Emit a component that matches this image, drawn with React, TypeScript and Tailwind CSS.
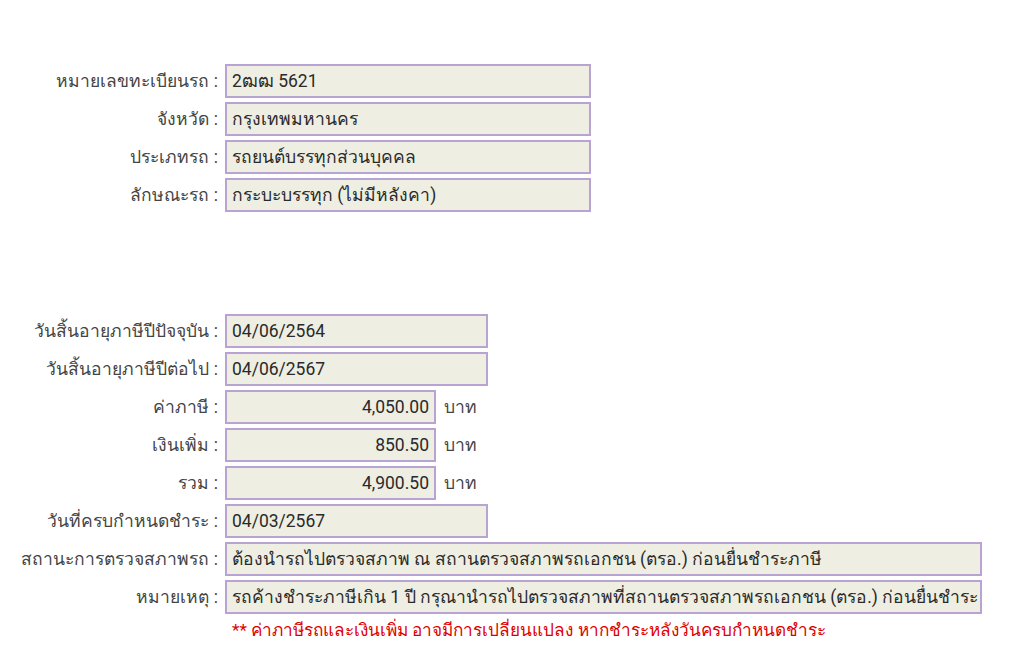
import React from "react";

const font = { fontFamily: "Roboto, 'Noto Sans', sans-serif" };

function Row({
  label,
  value,
  w,
  right,
  unit,
  mt,
}: {
  label: string;
  value: string;
  w: string;
  right?: boolean;
  unit?: string;
  mt?: string;
}) {
  return (
    <div className={`flex items-center h-[34px] ${mt ?? "mt-[4px]"}`}>
      <div className="w-[222px] shrink-0 text-right pr-[4px] text-[17.5px] text-[#444] whitespace-nowrap">
        {label} :
      </div>
      <div
        className={`ml-[3px] h-[34px] ${w} border-2 border-[#b9a3d3] bg-[#eeeee2] flex items-center px-[5px] text-[17.5px] text-[#2a2a2a] whitespace-nowrap overflow-hidden ${
          right ? "justify-end" : ""
        }`}
      >
        {value}
      </div>
      {unit && <div className="ml-[8px] text-[17.5px] text-[#444]">{unit}</div>}
    </div>
  );
}

export default function App() {
  return (
    <div className="w-[1026px] h-[665px] bg-white" style={font}>
      <div className="pt-[64px]">
        <Row label="หมายเลขทะเบียนรถ" value="2ฒฒ 5621" w="w-[366px]" mt="mt-0" />
        <Row label="จังหวัด" value="กรุงเทพมหานคร" w="w-[366px]" />
        <Row label="ประเภทรถ" value="รถยนต์บรรทุกส่วนบุคคล" w="w-[366px]" />
        <Row label="ลักษณะรถ" value="กระบะบรรทุก (ไม่มีหลังคา)" w="w-[366px]" />
        <Row label="วันสิ้นอายุภาษีปีปัจจุบัน" value="04/06/2564" w="w-[263px]" mt="mt-[102px]" />
        <Row label="วันสิ้นอายุภาษีปีต่อไป" value="04/06/2567" w="w-[263px]" />
        <Row label="ค่าภาษี" value="4,050.00" w="w-[211px]" right unit="บาท" />
        <Row label="เงินเพิ่ม" value="850.50" w="w-[211px]" right unit="บาท" />
        <Row label="รวม" value="4,900.50" w="w-[211px]" right unit="บาท" />
        <Row label="วันที่ครบกำหนดชำระ" value="04/03/2567" w="w-[263px]" />
        <Row
          label="สถานะการตรวจสภาพรถ"
          value="ต้องนำรถไปตรวจสภาพ ณ สถานตรวจสภาพรถเอกชน (ตรอ.) ก่อนยื่นชำระภาษี"
          w="w-[757px]"
        />
        <Row
          label="หมายเหตุ"
          value="รถค้างชำระภาษีเกิน 1 ปี กรุณานำรถไปตรวจสภาพที่สถานตรวจสภาพรถเอกชน (ตรอ.) ก่อนยื่นชำระ"
          w="w-[757px]"
        />
        <div className="pl-[232px] mt-[4px] text-[17.2px] text-[#e00000] whitespace-nowrap">
          ** ค่าภาษีรถและเงินเพิ่ม อาจมีการเปลี่ยนแปลง หากชำระหลังวันครบกำหนดชำระ
        </div>
      </div>
    </div>
  );
}
